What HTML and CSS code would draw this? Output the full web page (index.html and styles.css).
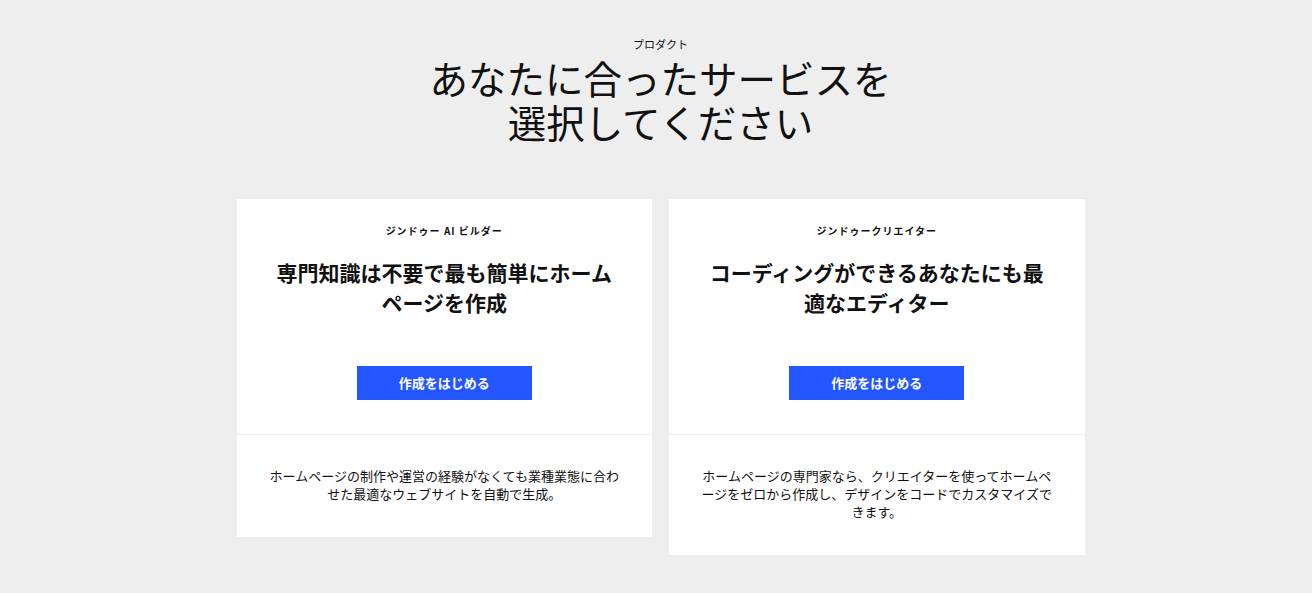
FILE: index.html
```html
<!DOCTYPE html>
<html lang="ja">
<head>
  <meta charset="UTF-8">
  <meta name="viewport" content="width=device-width, initial-scale=1.0">
  <title>プロダクト</title>
  <link rel="stylesheet" href="styles.css">
</head>
<body>

  <section class="products">
    <div class="eyebrow">プロダクト</div>
    <h1 class="headline">あなたに合ったサービスを<br>選択してください</h1>

    <div class="cards">
      <div class="card">
        <div class="card-top">
          <div class="card-label">ジンドゥー AI ビルダー</div>
          <h2 class="card-title">専門知識は不要で最も簡単にホームページを作成</h2>
          <a class="btn" href="#">作成をはじめる</a>
        </div>
        <div class="card-bottom">
          <p>ホームページの制作や運営の経験がなくても業種業態に合わせた最適なウェブサイトを自動で生成。</p>
        </div>
      </div>

      <div class="card">
        <div class="card-top">
          <div class="card-label">ジンドゥークリエイター</div>
          <h2 class="card-title">コーディングができるあなたにも最適なエディター</h2>
          <a class="btn" href="#">作成をはじめる</a>
        </div>
        <div class="card-bottom">
          <p>ホームページの専門家なら、クリエイターを使ってホームページをゼロから作成し、デザインをコードでカスタマイズできます。</p>
        </div>
      </div>
    </div>
  </section>

</body>
</html>
```

FILE: styles.css
```css
body {
  margin: 0;
  padding: 0 0 0 9px;
  background: #eeeeee;
  color: #111;
  font-family: "Noto Sans CJK JP", "Noto Sans", sans-serif;
}

.products {
  display: flex;
  flex-direction: column;
  align-items: center;
  padding-top: 37px;
  padding-bottom: 37px;
}

.eyebrow {
  font-size: 11px;
  line-height: 14px;
}

.headline {
  margin: 4px 0 0;
  font-size: 38.5px;
  font-weight: 400;
  line-height: 44px;
  text-align: center;
}

.cards {
  display: flex;
  align-items: flex-start;
  gap: 17px;
  width: 848px;
  margin-top: 56px;
}

.card {
  flex: 1;
  background: #fff;
  text-align: center;
}

.card-top {
  display: flex;
  flex-direction: column;
  align-items: center;
  padding: 25px 38px 34px;
  border-bottom: 1px solid #eeeeee;
}

.card-label {
  font-size: 10px;
  font-weight: 700;
  line-height: 14px;
  letter-spacing: 0.1em;
}

.card-title {
  margin: 19px 0 0;
  font-size: 21px;
  font-weight: 700;
  line-height: 30px;
}

.btn {
  display: block;
  width: 175px;
  height: 34px;
  margin-top: 49px;
  background: #2356ff;
  color: #fff;
  font-size: 13px;
  font-weight: 700;
  line-height: 34px;
  text-decoration: none;
}

.card-bottom {
  padding: 32px 31px 34px;
}

.card-bottom p {
  margin: 0;
  font-size: 13px;
  line-height: 18px;
}
```
